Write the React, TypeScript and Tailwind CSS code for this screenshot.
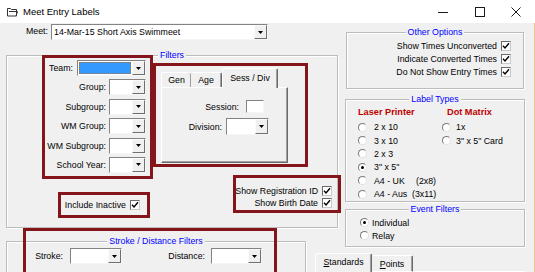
import React from 'react';

function Arrow() {
  return (
    <svg width="5" height="3" viewBox="0 0 5 3">
      <path d="M0 0H5L2.5 3Z" fill="#000" />
    </svg>
  );
}

function Combo({ className = '', focus = false, children }: { className?: string; focus?: boolean; children?: React.ReactNode }) {
  return (
    <div className={`flex h-[16px] shrink-0 border border-t-[#838383] border-l-[#838383] border-b-[#f6f6f6] border-r-[#f6f6f6] bg-white ${className}`}>
      <div className="flex flex-1 items-center overflow-hidden p-[1px]">
        {focus && <div className="h-full w-full border border-dotted border-[#b5712b] bg-[#3399ff]" />}
        {children}
      </div>
      <div className="flex w-[13px] items-center justify-center border border-t-[#fbfbfb] border-l-[#fbfbfb] border-b-[#6f6f6f] border-r-[#6f6f6f] bg-[#f0f0f0]">
        <Arrow />
      </div>
    </div>
  );
}

function Check({ className = '' }: { className?: string }) {
  return (
    <span className={`inline-flex h-[10px] w-[10px] shrink-0 items-center justify-center border border-t-[#6b6b6b] border-l-[#6b6b6b] border-b-[#c9c9c9] border-r-[#c9c9c9] bg-white ${className}`}>
      <svg width="8" height="8" viewBox="0 0 8 8">
        <path d="M1 3.8L3 6L7 1.2" stroke="#000" strokeWidth="1.4" fill="none" />
      </svg>
    </span>
  );
}

function Radio({ on = false }: { on?: boolean }) {
  return (
    <span className="inline-flex h-[9px] w-[9px] shrink-0 items-center justify-center rounded-full border border-t-[#7a7a7a] border-l-[#7a7a7a] border-b-[#e2e2e2] border-r-[#e2e2e2] bg-white">
      {on && <span className="h-[3px] w-[3px] rounded-full bg-black" />}
    </span>
  );
}

function Group({ title, className = '', children }: { title: string; className?: string; children?: React.ReactNode }) {
  return (
    <div className={`relative border border-[#bcbcbc] shadow-[inset_1px_1px_0_#fff,1px_1px_0_#fff] ${className}`}>
      <div className="absolute inset-x-0 top-[-7px] flex justify-center">
        <span className="bg-[#f0f0f0] px-[2px] leading-[12px] text-[#0000ff]">{title}</span>
      </div>
      {children}
    </div>
  );
}

export default function App() {
  const filterRows = ['Group:', 'Subgroup:', 'WM Group:', 'WM Subgroup:', 'School Year:'];

  return (
    <div className="h-[272px] w-[535px] overflow-hidden whitespace-nowrap bg-[#f0f0f0] font-['Liberation_Sans',Arial,sans-serif] text-[8.8px] leading-[12px] text-black">
      {/* title bar */}
      <div className="flex h-[23px] items-center bg-white">
        <svg className="ml-[7px]" width="11" height="10" viewBox="0 0 11 10">
          <path d="M0.5 1.5h3l1 1h5v6.5h-9z" fill="none" stroke="#333" />
          <path d="M2 4.5h8.5l-1.5 4.5" fill="none" stroke="#333" />
        </svg>
        <span className="ml-[5px] text-[9.5px]">Meet Entry Labels</span>
        <div className="ml-auto mr-[1px] flex h-full">
          <div className="flex w-[37px] items-center justify-center">
            <svg width="10" height="10" viewBox="0 0 10 10"><path d="M0 5.5H10" stroke="#1a1a1a" /></svg>
          </div>
          <div className="flex w-[37px] items-center justify-center">
            <svg width="10" height="10" viewBox="0 0 10 10"><rect x="0.5" y="0.5" width="9" height="9" fill="none" stroke="#1a1a1a" /></svg>
          </div>
          <div className="flex w-[36px] items-center justify-center">
            <svg width="10" height="10" viewBox="0 0 10 10"><path d="M0.5 0.5L9.5 9.5M9.5 0.5L0.5 9.5" stroke="#1a1a1a" /></svg>
          </div>
        </div>
      </div>

      {/* body */}
      <div className="flex h-[249px] border-r border-r-[#f2c48d]">
        {/* left column */}
        <div className="w-[338px] shrink-0">
          <div className="mt-[1px] flex h-[16px] items-center">
            <span className="mb-[2px] w-[48px] text-right">Meet:</span>
            <Combo className="ml-[3px] w-[217px]">
              <span className="pl-[1px]">14-Mar-15 Short Axis Swimmeet</span>
            </Combo>
          </div>

          <Group title="Filters" className="ml-[6px] mt-[15px] h-[173px] w-[332px]">
            <div className="flex items-start pl-[35px]">
              <div className="-mt-[1px] flex h-[124px] w-[111px] flex-col gap-[3.4px] border-[3px] border-[#84161b] pr-[4px] pt-[2px]">
                <div className="flex h-[16px] items-center justify-end gap-[4px]">
                  <span>Team:</span>
                  <Combo className="w-[69px]" focus />
                </div>
                {filterRows.map((label) => (
                  <div key={label} className="flex h-[16px] items-center justify-end gap-[3px]">
                    <span>{label}</span>
                    <Combo className="w-[37px]" />
                  </div>
                ))}
              </div>

              <div className="mt-[7px] h-[104px] w-[155px] border-[3px] border-[#84161b] pl-[2px] pt-[2px]">
                <div className="ml-[3px] flex h-[19px] items-end">
                  <div className="flex h-[15px] w-[30px] items-center justify-center rounded-t-[2px] border-l border-t border-white border-r-[#6b6b6b] shadow-[inset_-1px_0_0_#a0a0a0]">Gen</div>
                  <div className="flex h-[15px] w-[31px] items-center justify-center rounded-t-[2px] border-t border-r border-t-white border-r-[#6b6b6b] shadow-[inset_-1px_0_0_#a0a0a0]">Age</div>
                  <div className="relative z-10 -mb-[1px] flex h-[20px] w-[56px] items-center justify-center rounded-t-[2px] border-l border-t border-r border-l-white border-t-white border-r-[#6b6b6b] bg-[#f0f0f0] pb-[2px] shadow-[inset_-1px_0_0_#a0a0a0]">Sess / Div</div>
                </div>
                <div className="ml-[3px] h-[76px] w-[127px] border border-t-white border-l-white border-b-[#6b6b6b] border-r-[#6b6b6b] shadow-[inset_-1px_-1px_0_#a0a0a0]">
                  <div className="mt-[12px] flex items-center">
                    <span className="w-[77px] text-right">Session:</span>
                    <div className="ml-[7px] h-[13px] w-[18px] border border-t-[#838383] border-l-[#838383] border-b-[#f6f6f6] border-r-[#f6f6f6] bg-white" />
                  </div>
                  <div className="mt-[5px] flex items-center">
                    <span className="w-[60px] text-right">Division:</span>
                    <Combo className="ml-[4px] h-[17px] w-[43px]" />
                  </div>
                </div>
              </div>
            </div>

            <div className="-mt-[4px] flex items-start pl-[51px]">
              <div className="mt-[17px] flex h-[26px] w-[92px] shrink-0 items-center justify-end border-[3px] border-[#84161b] pr-[7px]">
                <span>Include Inactive</span>
                <Check className="ml-[4px]" />
              </div>
              <div className="ml-[83px] flex h-[38px] w-[108px] shrink-0 flex-col items-end border-[3px] border-[#84161b] pr-[6px] pt-[7px]">
                <div className="flex h-[12px] items-center">
                  <span>Show Registration ID</span>
                  <Check className="ml-[4px]" />
                </div>
                <div className="flex h-[12px] items-center">
                  <span>Show Birth Date</span>
                  <Check className="ml-[4px]" />
                </div>
              </div>
            </div>
          </Group>

          <Group title="Stroke / Distance Filters" className="ml-[6px] mt-[13px] h-[44px] w-[300px]">
            <div className="absolute left-[16px] top-[-14px] h-[60px] w-[254px] border-[3px] border-[#84161b]" />
            <div className="mt-[6px] flex h-[16px] items-center">
              <span className="w-[56px] text-right">Stroke:</span>
              <Combo className="ml-[7px] w-[52px]" />
              <span className="w-[83px] text-right">Distance:</span>
              <Combo className="ml-[6px] w-[51px]" />
            </div>
          </Group>
        </div>

        {/* right column */}
        <div className="ml-[7px] w-[180px] shrink-0">
          <Group title="Other Options" className="mx-[1px] mt-[9px] h-[57px]">
            <div className="flex flex-col items-end pr-[12px] pt-[6px]">
              {['Show Times Unconverted', 'Indicate Converted Times', 'Do Not Show Entry Times'].map((t) => (
                <div key={t} className="flex h-[13px] items-center">
                  <span>{t}</span>
                  <Check className="ml-[4px]" />
                </div>
              ))}
            </div>
          </Group>

          <Group title="Label Types" className="mt-[10px] h-[103px]">
            <div className="pl-[12px] pt-[6px]">
              <div className="flex h-[12px] items-center text-[9.2px] font-bold text-[#c00000]">
                <span className="w-[84px]">Laser Printer</span>
                <span className="pl-[5px]">Dot Matrix</span>
              </div>
              <div className="mt-[2.5px] flex">
                <div className="w-[84px]">
                  <div className="flex h-[13.4px] items-center"><Radio /><span className="ml-[7px]">2 x 10</span></div>
                  <div className="flex h-[13.4px] items-center"><Radio /><span className="ml-[7px]">3 x 10</span></div>
                  <div className="flex h-[13.4px] items-center"><Radio /><span className="ml-[7px]">2 x 3</span></div>
                  <div className="flex h-[13.4px] items-center"><Radio on /><span className="ml-[7px]">3" x 5"</span></div>
                  <div className="flex h-[13.4px] items-center"><Radio /><span className="ml-[7px] inline-block w-[42px]">A4 - UK</span><span>(2x8)</span></div>
                  <div className="flex h-[13.4px] items-center"><Radio /><span className="ml-[7px] inline-block w-[38px]">A4 - Aus</span><span>(3x11)</span></div>
                </div>
                <div>
                  <div className="flex h-[13.4px] items-center"><Radio /><span className="ml-[5px]">1x</span></div>
                  <div className="flex h-[13.4px] items-center"><Radio /><span className="ml-[5px]">3" x 5" Card</span></div>
                </div>
              </div>
            </div>
          </Group>

          <Group title="Event Filters" className="mt-[7px] h-[38px]">
            <div className="pl-[14px] pt-[6px]">
              <div className="flex h-[13px] items-center"><Radio on /><span className="ml-[3px]">Individual</span></div>
              <div className="flex h-[13px] items-center"><Radio /><span className="ml-[3px]">Relay</span></div>
            </div>
          </Group>

          <div className="-ml-[30px] mt-[6px] flex h-[19px] items-end">
            <div className="flex h-[19px] w-[57px] items-center justify-center rounded-t-[2px] border-l border-t border-r border-l-white border-t-white border-r-[#6b6b6b] pb-[2px] shadow-[inset_-1px_0_0_#a0a0a0]">
              <span><span className="underline">S</span>tandards</span>
            </div>
            <div className="flex h-[17px] w-[41px] items-center justify-center rounded-t-[2px] border-t border-r border-b border-t-white border-b-white border-r-[#6b6b6b] shadow-[inset_-1px_0_0_#a0a0a0]">
              <span><span className="underline">P</span>oints</span>
            </div>
            <div className="h-[1px] flex-1 bg-white" />
          </div>
        </div>
      </div>
    </div>
  );
}
